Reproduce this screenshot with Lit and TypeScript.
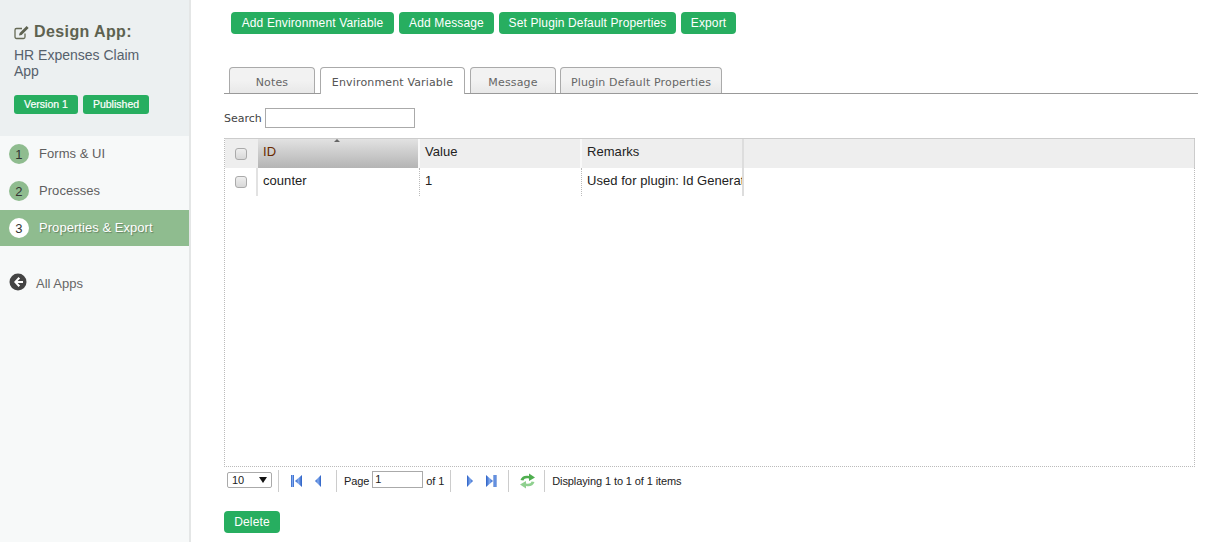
import { LitElement, html, css } from "lit";
import { customElement } from "lit/decorators.js";

@customElement("app-root")
export class AppRoot extends LitElement {
  static styles = css`
    :host { display: block; width: 1227px; height: 542px; overflow: hidden; font-family: "Liberation Sans", Arial, sans-serif; background: #fff; }
    * { box-sizing: border-box; }
    .page { display: flex; height: 542px; }
    .side { width: 191px; flex: none; background: #f7f9f9; border-right: 2px solid #e4e6e6; display: flex; flex-direction: column; }
    .head { height: 136px; background: #ecf0f1; padding: 22px 14px 0; color: #5a6672; }
    .title { display: flex; align-items: center; gap: 4px; font-weight: bold; font-size: 16px; letter-spacing: 0.4px; color: #5e6250; height: 20px; }
    .appname { margin-top: 5px; font-size: 14px; line-height: 16px; color: #56616c; width: 150px; }
    .badges { display: flex; gap: 5px; margin-top: 16px; }
    .badge { height: 19px; line-height: 19px; border-radius: 3px; background: #27ae60; color: #fff; font-size: 10.5px; text-align: center; -webkit-text-stroke: 0.2px #fff; }
    .b1 { width: 64px; } .b2 { width: 66px; }
    .nav { display: flex; align-items: center; height: 37px; padding-bottom: 2px; font-size: 13px; letter-spacing: 0.05px; color: #5f5f5f; padding-left: 9px; gap: 10px; }
    .nav.active { height: 36px; padding-bottom: 1px; background: #8fbc8f; color: #fff; text-shadow: 1px 1px 1px rgba(0,0,0,.3); }
    .num { width: 20px; height: 20px; margin-top: 1px; border-radius: 50%; background: #8fbc8f; color: #333; font-size: 13px; display: flex; align-items: center; justify-content: center; text-shadow: none; }
    .active .num { background: #fff; color: #333; }
    .all { display: flex; align-items: center; height: 20px; gap: 9px; margin: 27px 0 0 9px; font-size: 13px; color: #666; }
    .all svg { margin-top: -3px; }
    .main { flex: 1; padding: 12px 0 0 33px; min-width: 0; }
    .btns { display: flex; gap: 5px; padding-left: 7px; }
    .btn { height: 22px; line-height: 22px; text-align: center; border-radius: 4px; background: #27ae60; color: #fff; font-size: 12px; letter-spacing: 0.13px; white-space: nowrap; }
    .w1 { width: 163px; } .w2 { width: 95px; } .w3 { width: 177px; } .w4 { width: 55px; }
    .tabs { margin-top: 33px; width: 974px; height: 27px; border-bottom: 1px solid #999; display: flex; padding-left: 5px; }
    .tab { height: 26px; padding-top: 3px; border: 1px solid #aaa; border-bottom: none; border-radius: 4px 4px 0 0; background: linear-gradient(#f2f2f2 50%, #e8e8e8); font: 11px "DejaVu Sans", Verdana, sans-serif; letter-spacing: 0.15px; color: #666; display: flex; align-items: center; justify-content: center; }
    .tab.on { height: 27px; padding-top: 2px; background: #fff; color: #555; margin-bottom: -1px; }
    .t1 { width: 86px; margin-right: 5px; } .t2 { width: 145px; margin-right: 5px; } .t3 { width: 86px; margin-right: 4px; } .t4 { width: 162px; }
    .search { display: flex; align-items: center; height: 20px; margin-top: 14px; gap: 3px; font: 11px "DejaVu Sans", Verdana, sans-serif; color: #444; }
    .search .inp { width: 150px; height: 20px; border: 1px solid #aaa; background: #fff; }
    .grid { width: 971px; height: 329px; margin-top: 10px; border: 1px dotted #bbb; border-top: 1px solid #ccc; }
    .row { display: grid; grid-template-columns: 33px 162px 162px 162px 1fr; }
    .row.h { height: 29px; background: #eee; border-right: 1px solid #ccc; margin-right: -1px; }
    .row.d { height: 28px; }
    .cell { font-size: 13px; letter-spacing: 0.05px; color: #222; padding: 0 0 5px 5px; display: flex; align-items: center; white-space: nowrap; overflow: hidden; border-right: 2px solid #e2e2e2; }
    .h .cell { border-right-color: #f8f8f8; }
    .h .cell.ch { border-right: none; }
    .h .cell:last-child, .d .cell:last-child { border-right: none; }
    .cell.rem { border-right-color: #ddd !important; }
    .cell.sorted { position: relative; background: linear-gradient(#e2e2e2, #b4b4b4); background-clip: padding-box; color: #6a2a00; }
    .d .cell { padding-bottom: 3px; }
    .d .cell.dash { border-right: 1px dotted #bbb; padding-right: 1px; }
    .sort { position: absolute; top: 0; left: 76px; width: 0; height: 0; border: 3px solid transparent; border-top: 0; border-bottom: 3px solid #666; }
    .cell.chk { justify-content: center; padding: 0 2px 0 0; }
    .d .cell.chk { padding: 0; }
    .box { display: block; width: 12px; height: 12px; border: 1px solid #aaa; border-radius: 3px; background: linear-gradient(#eee, #d8d8d8); }
    .pager { display: flex; align-items: center; height: 28px; margin-left: 3px; font-size: 11px; letter-spacing: -0.1px; color: #222; }
    .sel { width: 45px; height: 16px; border: 1px solid #aaa; border-radius: 2px; display: flex; align-items: center; justify-content: space-between; padding: 0 4px; margin-top: -3px; font-size: 11px; }
    .sep { width: 1px; height: 22px; background: #ccc; }
    .ic { display: block; flex: none; }
    .pinp { width: 51px; height: 17px; border: 1px solid #aaa; margin: -3px 3px 0 3px; padding-left: 2px; line-height: 15px; }
    .m6 { margin-left: 6px; } .m12 { margin-left: 12px; } .m14 { margin-left: 14px; } .m7 { margin-left: 7px; } .m8 { margin-left: 8px; }
    .m15 { margin-left: 15px; } .m11 { margin-left: 11px; } .m10 { margin-left: 10px; }
    .del { display: inline-block; height: 22px; line-height: 22px; width: 56px; text-align: center; border-radius: 4px; background: #27ae60; color: #fff; font-size: 12px; letter-spacing: 0.13px; margin-top: 16px; }
  `;

  render() {
    return html`<div class="page">
      <aside class="side">
        <div class="head">
          <div class="title">
            <svg width="16" height="15" viewBox="0 0 16 15" fill="none">
              <path d="M11 8.500V12a1.500 1.500 0 0 1-1.500 1.500H2.500A1.500 1.500 0 0 1 1 12V5a1.500 1.500 0 0 1 1.500-1.500H8" stroke="#666a55" stroke-width="1.300"/>
              <path d="M5 10.500l.6-2.500L12.600 1l2 2-7 7z" fill="#5e6250"/>
            </svg>
            Design App:
          </div>
          <div class="appname">HR Expenses Claim App</div>
          <div class="badges"><div class="badge b1">Version 1</div><div class="badge b2">Published</div></div>
        </div>
        <div class="nav"><span class="num">1</span>Forms &amp; UI</div>
        <div class="nav"><span class="num">2</span>Processes</div>
        <div class="nav active"><span class="num">3</span>Properties &amp; Export</div>
        <div class="all">
          <svg width="18" height="18" viewBox="0 0 18 18">
            <circle cx="9" cy="9" r="8.500" fill="#444"/>
            <path d="M9.500 4L5 9l4.500 5 1.600-1.500L8.600 10H14V8H8.600l2.500-2.500z" fill="#fff"/>
          </svg>
          All Apps
        </div>
      </aside>
      <main class="main">
        <div class="btns">
          <div class="btn w1">Add Environment Variable</div>
          <div class="btn w2">Add Message</div>
          <div class="btn w3">Set Plugin Default Properties</div>
          <div class="btn w4">Export</div>
        </div>
        <div class="tabs">
          <div class="tab t1">Notes</div>
          <div class="tab on t2">Environment Variable</div>
          <div class="tab t3">Message</div>
          <div class="tab t4">Plugin Default Properties</div>
        </div>
        <div class="search">Search <div class="inp"></div></div>
        <div class="grid">
          <div class="row h">
            <div class="cell chk ch"><span class="box"></span></div>
            <div class="cell sorted"><span class="sort"></span>ID</div>
            <div class="cell">Value</div>
            <div class="cell rem">Remarks</div>
            <div class="cell"></div>
          </div>
          <div class="row d">
            <div class="cell chk"><span class="box"></span></div>
            <div class="cell dash">counter</div>
            <div class="cell dash">1</div>
            <div class="cell rem">Used for plugin: Id Generator</div>
            <div class="cell"></div>
          </div>
        </div>
        <div class="pager">
          <div class="sel">10 <svg width="8" height="6" viewBox="0 0 8 6"><path d="M0 0h8L4 6z" fill="#111"/></svg></div>
          <span class="sep m6"></span>
          <svg class="ic m12" width="12" height="14" viewBox="0 0 12 14">
            <defs><linearGradient id="bl" x1="0" x2="1" y1="0" y2="0"><stop offset="0" stop-color="#2a5fc4"/><stop offset=".5" stop-color="#7fa8ee"/><stop offset="1" stop-color="#2a5fc4"/></linearGradient></defs>
            <rect x="0" y="1" width="3" height="12" fill="url(#bl)"/><path d="M11 1v12L4 7z" fill="url(#bl)"/>
          </svg>
          <svg class="ic m11" width="8" height="14" viewBox="0 0 8 14"><path d="M7 1v12L1 7z" fill="url(#bl)"/></svg>
          <span class="sep m14"></span>
          <span class="m7">Page</span><div class="pinp">1</div>of 1
          <span class="sep m6"></span>
          <svg class="ic m15" width="8" height="14" viewBox="0 0 8 14"><path d="M1 1v12l6-6z" fill="url(#bl)"/></svg>
          <svg class="ic m11" width="12" height="14" viewBox="0 0 12 14"><path d="M1 1v12l7-6z" fill="url(#bl)"/><rect x="8.500" y="1" width="3" height="12" fill="url(#bl)"/></svg>
          <span class="sep m11"></span>
          <svg class="ic m10" width="17" height="16" viewBox="0 0 17 16"><path d="M1.500 7C2.500 3.500 6 2 10 3V0.500l6 4-6 3.500V5.500C7 5 5 5.500 4.500 7.500z" fill="#4fae4f"/><path d="M15.500 9C14.500 12.500 11 14 7 13V15.500l-6-4 6-3.500V10.500c3 .5 5 0 5.500-2z" fill="#8fd08f"/></svg>
          <span class="sep m8"></span>
          <span class="m7">Displaying 1 to 1 of 1 items</span>
        </div>
        <div class="del">Delete</div>
      </main>
    </div>`;
  }
}
